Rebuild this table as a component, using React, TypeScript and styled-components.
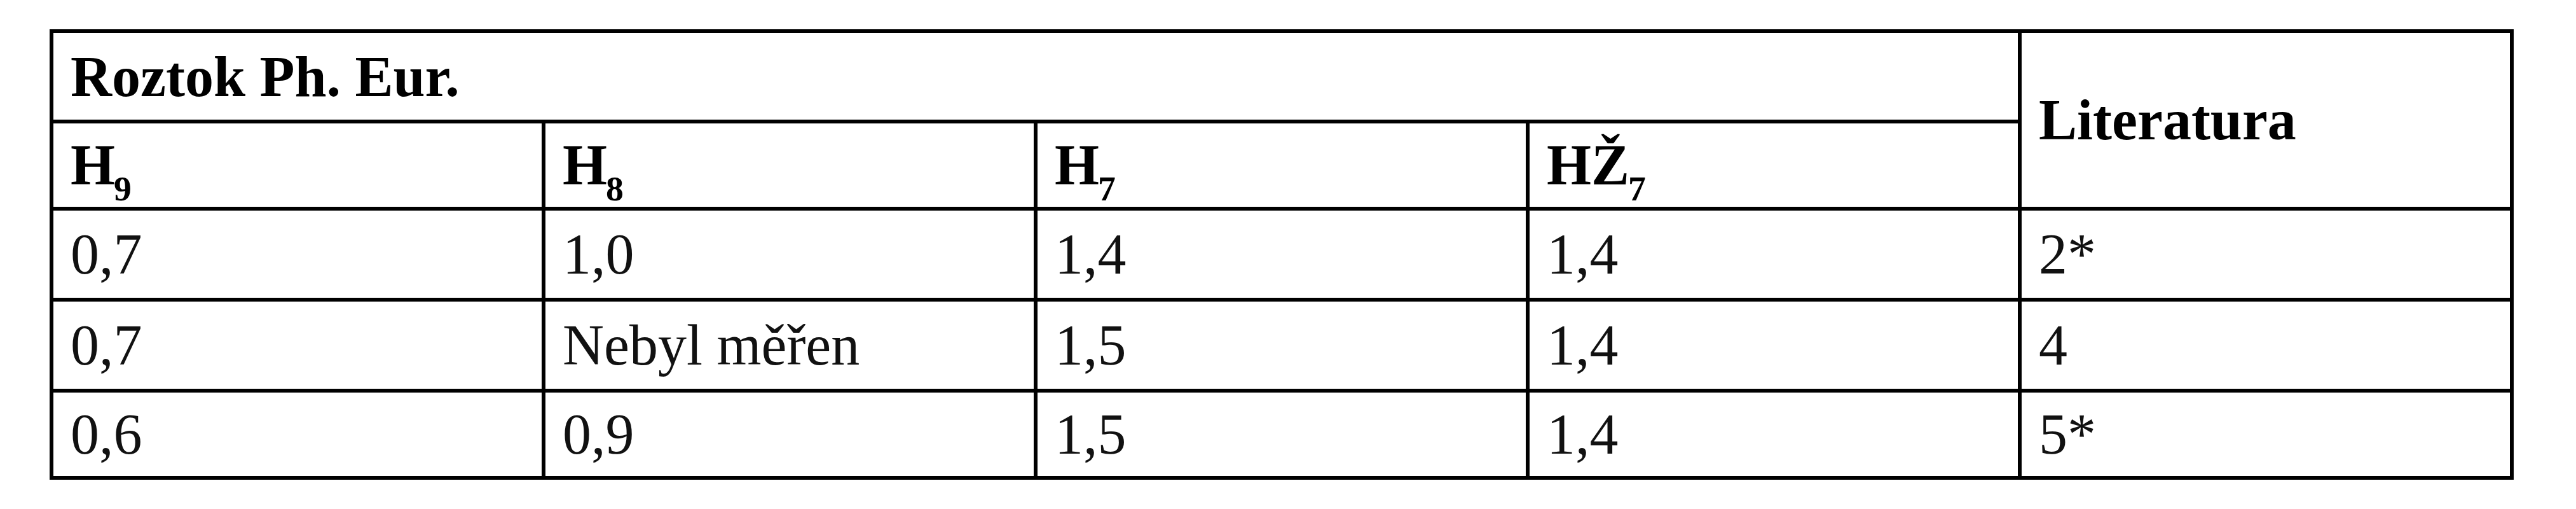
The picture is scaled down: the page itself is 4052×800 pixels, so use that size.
import React from 'react';
import styled, { createGlobalStyle } from 'styled-components';

const GlobalStyle = createGlobalStyle`
	html, body {
		margin: 0;
		padding: 0;
		background: #ffffff;
	}
	body {
		font-family: 'Liberation Serif', 'Times New Roman', serif;
		color: #000;
	}
`;

const Page = styled.div`
	padding: 46px 0 0 78px;
	min-height: 800px;
	box-sizing: border-box;
`;

const Table = styled.table`
	width: 3876px;
	table-layout: fixed;
	border-collapse: separate;
	border-spacing: 0;
	border-top: 6px solid #000;
	border-left: 6px solid #000;
	font-family: 'Liberation Serif', 'Times New Roman', serif;
	font-size: 90px;
`;

// row height counts the 6px line under the row
const Row = styled.tr<{ $h: number }>`
	height: ${({ $h }) => $h}px;
`;

const Cell = styled.td<{ $bold?: boolean }>`
	padding: 0 26px 0 27px;
	border-right: 6px solid #000;
	border-bottom: 6px solid #000;
	vertical-align: middle;
	text-align: left;
	font-weight: ${({ $bold }) => ($bold ? 700 : 400)};
	color: ${({ $bold }) => ($bold ? '#000' : '#111')};
	line-height: 1.1;
	white-space: nowrap;
`;

const Sub = styled.sub`
	font-size: 0.62em;
	line-height: 0;
	vertical-align: -0.45em;
	margin-left: -2px;
`;

const rows: { h: number; cells: string[] }[] = [
	{ h: 143, cells: ['0,7', '1,0', '1,4', '1,4', '2*'] },
	{ h: 143, cells: ['0,7', 'Nebyl měřen', '1,5', '1,4', '4'] },
	{ h: 137, cells: ['0,6', '0,9', '1,5', '1,4', '5*'] },
];

const heads: { main: string; sub: string }[] = [
	{ main: 'H', sub: '9' },
	{ main: 'H', sub: '8' },
	{ main: 'H', sub: '7' },
	{ main: 'HŽ', sub: '7' },
];

const App = () => {
	return (
		<Page>
			<GlobalStyle />
			<Table>
				<tbody>
					<Row $h={142}>
						<Cell $bold colSpan={4}>
							Roztok Ph. Eur.
						</Cell>
						<Cell $bold rowSpan={2}>
							Literatura
						</Cell>
					</Row>
					<Row $h={137}>
						{heads.map((hd, i) => (
							<Cell $bold key={i}>
								{hd.main}
								<Sub>{hd.sub}</Sub>
							</Cell>
						))}
					</Row>
					{rows.map((r, i) => (
						<Row $h={r.h} key={i}>
							{r.cells.map((c, j) => (
								<Cell key={j}>{c}</Cell>
							))}
						</Row>
					))}
				</tbody>
			</Table>
		</Page>
	);
};

export default App;
